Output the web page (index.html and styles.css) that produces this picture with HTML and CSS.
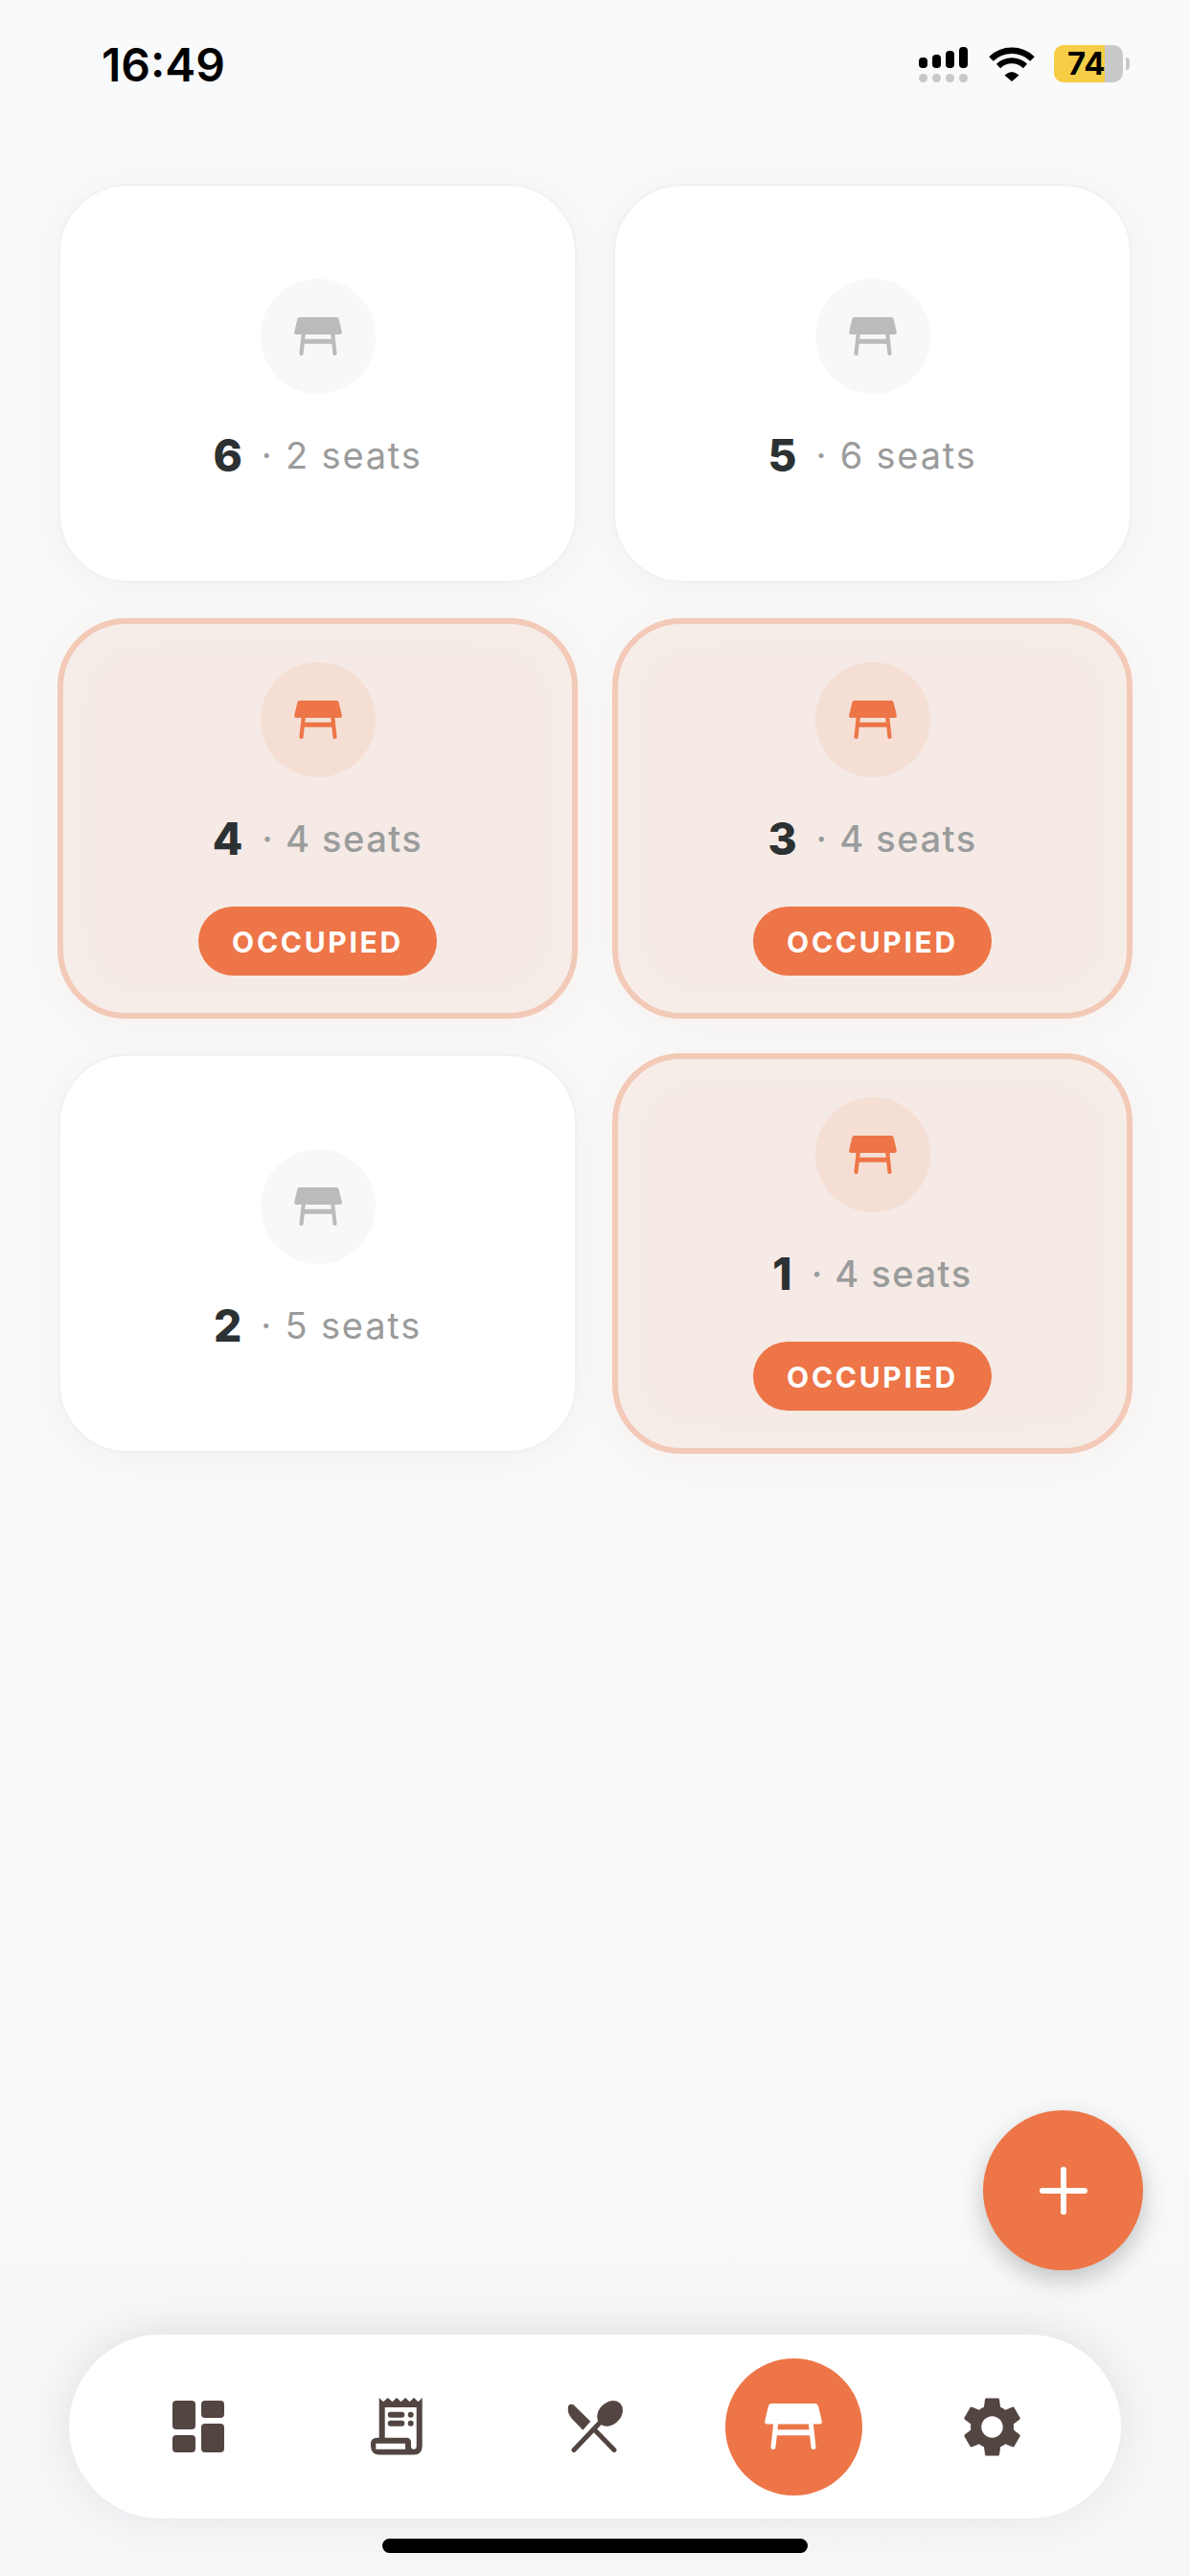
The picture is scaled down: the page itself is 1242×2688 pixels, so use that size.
FILE: index.html
```html
<!DOCTYPE html>
<html lang="en">
<head>
  <meta charset="UTF-8" />
  <title>Tables</title>
  <link rel="stylesheet" href="styles.css">
</head>
<body>
  <svg class="defs" width="0" height="0">
    <symbol id="table" viewBox="0 0 60 48">
      <path fill="currentColor" d="M7 0H53Q55.5 0 56 2.5L59.8 18.5Q60.2 21.5 57.5 21.5H2.5Q-.2 21.5 .2 18.5L4 2.5Q4.5 0 7 0Z"/>
      <path fill="none" stroke="currentColor" stroke-width="5" stroke-linecap="round" d="M11.8 20L9 45.5M48.2 20L51 45.5"/>
      <rect fill="currentColor" x="12" y="27.3" width="36" height="6"/>
    </symbol>
  </svg>

  <div class="app">
    <header class="status-bar">
      <span class="time">16:49</span>
      <div class="status-icons">
        <div class="signal">
          <div class="bars">
            <i class="b1"></i><i class="b2"></i><i class="b3"></i><i class="b4"></i>
          </div>
          <div class="dots"><i></i><i></i><i></i><i></i></div>
        </div>
        <svg class="wifi" width="48" height="36" viewBox="0 0 48 36">
          <path fill="none" stroke="#000" stroke-width="6.5" d="M2.5 12.5A31 31 0 0 1 45.5 12.5"/>
          <path fill="none" stroke="#000" stroke-width="6" d="M10 20A20 20 0 0 1 38 20"/>
          <path d="M16.5 29.5Q24 22.5 31.5 29.5L24 36Z"/>
        </svg>
        <div class="battery">
          <div class="battery-body"><span>74</span></div>
          <i class="battery-nub"></i>
        </div>
      </div>
    </header>

    <main class="tables">
      <div class="table-card">
        <div class="table-icon"><svg width="50" height="40"><use href="#table"/></svg></div>
        <div class="table-info"><b>6</b><span>· 2 seats</span></div>
      </div>
      <div class="table-card">
        <div class="table-icon"><svg width="50" height="40"><use href="#table"/></svg></div>
        <div class="table-info"><b>5</b><span>· 6 seats</span></div>
      </div>
      <div class="table-card occupied">
        <div class="table-icon"><svg width="50" height="40"><use href="#table"/></svg></div>
        <div class="table-info"><b>4</b><span>· 4 seats</span></div>
        <div class="badge">OCCUPIED</div>
      </div>
      <div class="table-card occupied">
        <div class="table-icon"><svg width="50" height="40"><use href="#table"/></svg></div>
        <div class="table-info"><b>3</b><span>· 4 seats</span></div>
        <div class="badge">OCCUPIED</div>
      </div>
      <div class="table-card">
        <div class="table-icon"><svg width="50" height="40"><use href="#table"/></svg></div>
        <div class="table-info"><b>2</b><span>· 5 seats</span></div>
      </div>
      <div class="table-card occupied">
        <div class="table-icon"><svg width="50" height="40"><use href="#table"/></svg></div>
        <div class="table-info"><b>1</b><span>· 4 seats</span></div>
        <div class="badge">OCCUPIED</div>
      </div>
    </main>

    <button class="fab">
      <svg width="50" height="50" viewBox="0 0 50 50">
        <path fill="none" stroke="#fff" stroke-width="6" stroke-linecap="round" d="M25 3V47M3 25H47"/>
      </svg>
    </button>

    <nav class="tab-bar">
      <a class="tab">
        <svg width="54" height="54" viewBox="0 0 54 54" fill="#534541">
          <rect width="24" height="30" rx="4"/>
          <rect x="30" width="24" height="18" rx="4"/>
          <rect y="36" width="24" height="18" rx="4"/>
          <rect x="30" y="24" width="24" height="30" rx="4"/>
        </svg>
      </a>
      <a class="tab">
        <svg width="54" height="60" viewBox="0 0 54 60" fill="#534541">
          <path fill-rule="evenodd" d="M8.7 0L13 4.2L17.8 0L22.5 4.2L27 0L31.5 4.2L36.2 0L40.5 4.2L45 0L49.5 4.2L53.7 0V50.5Q53.7 59.5 45 59.5H9Q0 59.5 0 50.5V48.5Q0 41.7 6.5 41.7H8.7ZM14.7 10V41.7H37Q42 41.7 42 46.5V50.5Q42 53.7 44.8 53.7Q47.7 53.7 47.7 50.5V10ZM5.3 47.7V53.7H36V47.7Z"/>
          <rect x="17.7" y="14.7" width="17.6" height="6" rx="3"/>
          <rect x="17.7" y="23.7" width="17.6" height="6" rx="3"/>
          <circle cx="41.7" cy="17.7" r="3"/>
          <circle cx="41.7" cy="26.7" r="3"/>
        </svg>
      </a>
      <a class="tab">
        <svg width="58" height="54" viewBox="0 0 58 54" fill="#534541">
          <path d="M6.5 4.3L24.3 21.7L16.4 30.7L5 19Q.5 14 .8 8Q1 2.5 6.5 4.3Z"/>
          <ellipse cx="44.6" cy="13.4" rx="15" ry="11.5" transform="rotate(-45 44.6 13.4)"/>
          <path fill="none" stroke="#534541" stroke-width="5" stroke-linecap="round" d="M7 51.5L36 21M30 32L49 51.5"/>
        </svg>
      </a>
      <a class="tab active">
        <span class="tab-circle"><svg width="60" height="48"><use href="#table"/></svg></span>
      </a>
      <a class="tab">
        <svg width="75" height="75" viewBox="0 0 24 24" fill="#534541">
          <path d="M19.14 12.94c.04-.3.06-.61.06-.94 0-.32-.02-.64-.07-.94l2.03-1.58c.18-.14.23-.41.12-.61l-1.92-3.32c-.12-.22-.37-.29-.59-.22l-2.39.96c-.5-.38-1.03-.7-1.62-.94l-.36-2.54c-.04-.24-.24-.41-.48-.41h-3.84c-.24 0-.43.17-.47.41l-.36 2.54c-.59.24-1.13.57-1.62.94l-2.39-.96c-.22-.08-.47 0-.59.22L2.74 8.87c-.12.21-.08.47.12.61l2.03 1.58c-.05.3-.07.63-.07.94s.02.64.07.94l-2.03 1.58c-.18.14-.23.41-.12.61l1.92 3.32c.12.22.37.29.59.22l2.39-.96c.5.38 1.03.7 1.62.94l.36 2.54c.05.24.24.41.48.41h3.84c.24 0 .44-.17.47-.41l.36-2.54c.59-.24 1.13-.56 1.62-.94l2.39.96c.22.08.47 0 .59-.22l1.92-3.32c.12-.22.07-.47-.12-.61l-2.01-1.58zM12 15.6c-1.98 0-3.6-1.62-3.6-3.6s1.62-3.6 3.6-3.6 3.6 1.62 3.6 3.6-1.62 3.6-3.6 3.6z"/>
        </svg>
      </a>
    </nav>

    <div class="home-area"><div class="home-bar"></div></div>
  </div>
</body>
</html>
```

FILE: styles.css
```css
body {
  margin: 0;
  font-family: Inter, "Noto Sans", sans-serif;
  background: #f8f9f9;
}
.defs {
  position: absolute;
}
.app {
  position: relative;
  width: 1242px;
  height: 2688px;
  overflow: hidden;
  display: flex;
  flex-direction: column;
  background: linear-gradient(#f9fafc 0, #f8f9f9 8%, #f8f9f9 82%, #f5f6f8 100%);
}

/* Barre d'etat */
.status-bar {
  height: 193px;
  box-sizing: border-box;
  padding: 47px 63px 0 106px;
  display: flex;
  justify-content: space-between;
  align-items: flex-start;
}
.time {
  font-size: 48px;
  font-weight: 600;
  line-height: 42px;
  color: #000;
}
.status-icons {
  display: flex;
  align-items: flex-start;
}
.signal {
  margin-top: 2px;
  width: 51px;
}
.bars, .dots {
  display: flex;
  gap: 5px;
}
.bars {
  height: 22px;
  align-items: flex-end;
}
.bars i {
  width: 9px;
  background: #000;
  border-radius: 4px;
}
.bars .b1 { height: 11px; }
.bars .b2 { height: 14px; }
.bars .b3 { height: 18px; }
.bars .b4 { height: 22px; }
.dots {
  margin-top: 6px;
}
.dots i {
  width: 9px;
  height: 9px;
  border-radius: 50%;
  background: #c8c8c8;
}
.wifi {
  margin: 2px 0 0 22px;
}
.battery {
  margin-left: 20px;
  display: flex;
  align-items: center;
}
.battery-body {
  width: 72px;
  height: 39px;
  border-radius: 10px;
  background: linear-gradient(90deg, #f6cd46 53px, #c8c9cb 53px);
  font-size: 33px;
  font-weight: 700;
  line-height: 39px;
  color: #000;
  text-indent: 14px;
}
.battery-nub {
  margin-left: 3px;
  width: 4px;
  height: 13px;
  background: #c8c9cb;
  border-radius: 0 4px 4px 0;
}

/* Grille des tables */
.tables {
  padding: 0 62px;
  display: grid;
  grid-template-columns: 1fr 1fr;
  grid-auto-rows: 414px;
  gap: 40px;
}
.table-card {
  box-sizing: border-box;
  margin: -1px;
  display: flex;
  flex-direction: column;
  align-items: center;
  justify-content: center;
  background: #fff;
  border: 2.5px solid #f1f1f1;
  border-radius: 72px;
  box-shadow: 0 4px 40px rgba(0, 0, 0, 0.035);
  color: #bbbbbb;
}
.table-card.occupied {
  margin: -2px;
  background: #f5eae5;
  border: 6px solid #f3c9b7;
  color: #ed7547;
  box-shadow: 0 6px 40px rgba(238, 118, 71, 0.06), inset 0 0 60px rgba(255, 255, 255, 0.3);
}
.table-icon {
  width: 120px;
  height: 120px;
  border-radius: 50%;
  background: #f7f8f8;
  display: flex;
  align-items: center;
  justify-content: center;
}
.occupied .table-icon {
  background: #f5dfd5;
}
.table-info {
  margin-top: 30px;
  height: 68px;
  display: flex;
  align-items: center;
  gap: 20px;
}
.table-info b {
  font-size: 46px;
  font-weight: 800;
  color: #2c3133;
}
.table-info span {
  font-size: 38px;
  font-weight: 400;
  letter-spacing: 1.8px;
  color: #9b9b9b;
}
.occupied .table-info span {
  font-weight: 500;
  letter-spacing: 1.5px;
  color: #9a9c9c;
}
.badge {
  margin-top: 37px;
  width: 249px;
  height: 72px;
  border-radius: 36px;
  background: #ed7547;
  color: #fff;
  font-size: 30px;
  font-weight: 700;
  letter-spacing: 2.7px;
  line-height: 74px;
  text-align: center;
}

/* Bouton flottant */
.fab {
  position: absolute;
  right: 49px;
  bottom: 319px;
  width: 167px;
  height: 167px;
  padding: 0;
  border: none;
  border-radius: 50%;
  background: #ed7547;
  display: flex;
  align-items: center;
  justify-content: center;
  box-shadow: 0 10px 24px rgba(60, 60, 60, 0.28);
}

/* Menu du bas */
.tab-bar {
  margin: auto 72px 0;
  height: 192px;
  padding: 0 31.5px;
  background: #fff;
  border-radius: 96px;
  display: grid;
  grid-template-columns: repeat(5, 1fr);
  box-shadow: 0 -6px 50px rgba(0, 0, 0, 0.09);
}
.tab {
  display: flex;
  align-items: center;
  justify-content: center;
}
.tab-circle {
  width: 143px;
  height: 143px;
  border-radius: 50%;
  background: #ed7547;
  color: #fff;
  display: flex;
  align-items: center;
  justify-content: center;
}
.home-area {
  height: 60px;
  padding-top: 21px;
  box-sizing: border-box;
}
.home-bar {
  width: 444px;
  height: 15px;
  margin: 0 auto;
  border-radius: 8px;
  background: #000;
}
```
